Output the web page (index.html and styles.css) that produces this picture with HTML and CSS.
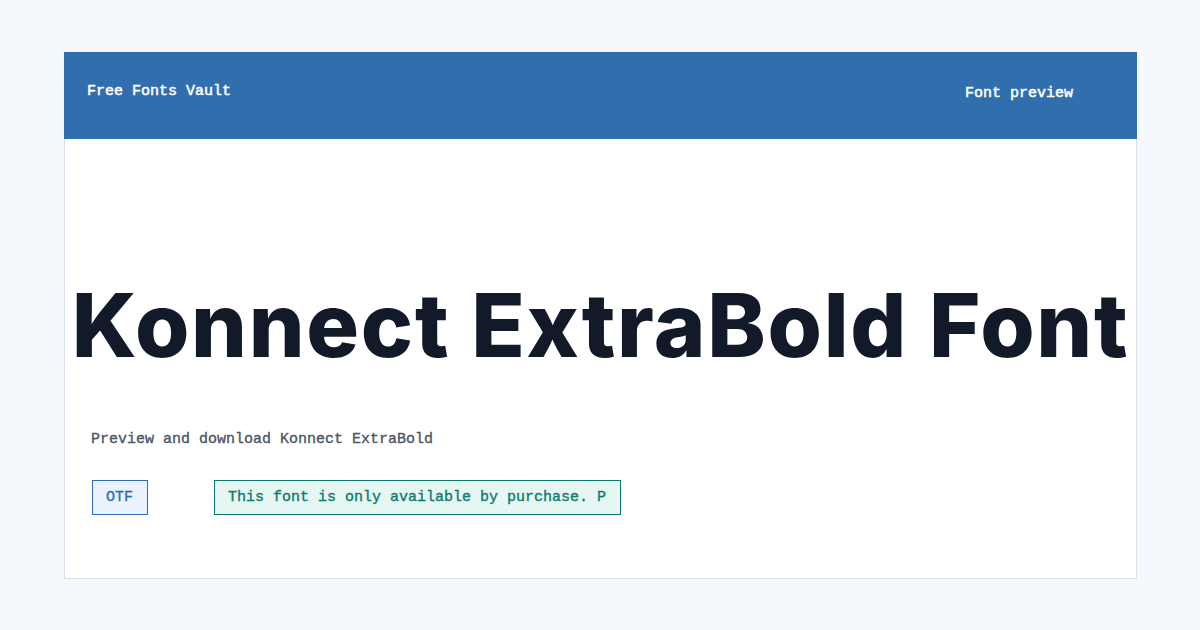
FILE: index.html
```html
<!DOCTYPE html>
<html lang="en">
<head>
	<meta charset="UTF-8">
	<title>Konnect ExtraBold Font</title>
	<link rel="stylesheet" href="styles.css">
</head>
<body>
	<div class="card">
		<div class="header">
			<span class="brand">Free Fonts Vault</span>
			<span class="nav">Font preview</span>
		</div>
		<div class="main">
			<h1 class="title">Konnect ExtraBold Font</h1>
			<p class="lead">Preview and download Konnect ExtraBold</p>
			<div class="tags">
				<span class="tag">OTF</span>
				<span class="notice">This font is only available by purchase. Please visit the designer's website.</span>
			</div>
		</div>
	</div>
</body>
</html>
```

FILE: styles.css
```css
*{
	margin:0;
	padding:0;
	box-sizing:border-box;
}
body{
	background:#f5f9fe;
	padding:52px 63px 0 64px;
	font-family:"Liberation Mono", monospace;
	font-size:15px;
	-webkit-text-stroke:0.35px currentColor;
}
.card{
	background:#fff;
	border:1px solid #d6dfea;
	border-top:none;
	height:527px;
}
.header{
	background:#306eae;
	height:87px;
	margin:0 -1px;
	display:flex;
	justify-content:space-between;
	align-items:flex-start;
	color:#fff;
	padding:0 64px 0 23px;
	-webkit-text-stroke:0.5px currentColor;
}
.brand{
	margin-top:31px;
}
.nav{
	margin-top:33px;
}
.main{
	padding:142px 0 0 26px;
}
.title{
	font-family:Inter, sans-serif;
	font-weight:800;
	font-size:88px;
	line-height:88px;
	color:#121a29;
	letter-spacing:1.7px;
	white-space:nowrap;
	text-align:center;
	margin-left:-26px;
	-webkit-text-stroke:0;
}
.lead{
	color:#4a5568;
	margin-top:61px;
	line-height:20px;
}
.tags{
	display:flex;
	gap:66px;
	margin-top:30px;
	margin-left:1px;
}
.tag{
	border:1px solid #2f6db0;
	background:#eaf2fd;
	color:#2f6db0;
	height:35px;
	line-height:33px;
	padding:0 14px 0 13px;
}
.notice{
	border:1px solid #0e7a6c;
	background:#e6f6f2;
	color:#0e7a6c;
	height:35px;
	line-height:33px;
	padding:0 11px 0 13px;
	width:407px;
	overflow:hidden;
	word-break:break-all;
}
```
